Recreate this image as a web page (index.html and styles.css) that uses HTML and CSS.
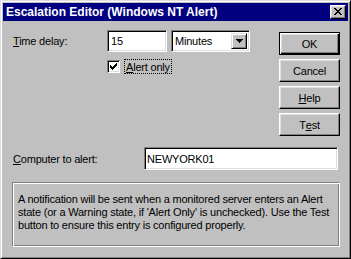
FILE: index.html
```html
<!DOCTYPE html>
<html>
<head>
<meta charset="utf-8">
<link rel="stylesheet" href="styles.css">
</head>
<body>
<div class="window">
  <div class="titlebar">
    <span class="title">Escalation Editor (Windows NT Alert)</span>
    <span class="close"><svg width="8" height="7" viewBox="0 0 8 7" shape-rendering="crispEdges"><path d="M0 0h2v1h-2z M6 0h2v1h-2z M1 1h2v1h-2z M5 1h2v1h-2z M2 2h4v1h-4z M3 3h2v1h-2z M2 4h4v1h-4z M1 5h2v1h-2z M5 5h2v1h-2z M0 6h2v1h-2z M6 6h2v1h-2z" fill="#000"/></svg></span>
  </div>
  <div class="content">
    <div class="top">
      <div class="form">
        <div class="row">
          <span class="lbl"><u>T</u>ime delay:</span>
          <span class="edit delay">15</span>
          <span class="combo"><span class="combo-text">Minutes</span><span class="drop"><svg width="7" height="4" viewBox="0 0 7 4" shape-rendering="crispEdges"><path d="M0 0h7v1h-7z M1 1h5v1h-5z M2 2h3v1h-3z M3 3h1v1h-1z" fill="#000"/></svg></span></span>
        </div>
        <div class="checkrow">
          <span class="check"><svg width="13" height="13" viewBox="0 0 13 13" shape-rendering="crispEdges"><path d="M3 5h1v3h-1z M4 6h1v3h-1z M5 7h1v3h-1z M6 6h1v3h-1z M7 5h1v3h-1z M8 4h1v3h-1z M9 3h1v3h-1z" fill="#000"/></svg></span>
          <span class="focus"><u>A</u>lert only</span>
        </div>
      </div>
      <div class="buttons">
        <span class="btn default">OK</span>
        <span class="btn">Cancel</span>
        <span class="btn"><u>H</u>elp</span>
        <span class="btn">T<u>e</u>st</span>
      </div>
    </div>
    <div class="comprow">
      <span class="lbl2"><u>C</u>omputer to alert:</span>
      <span class="edit comp">NEWYORK01</span>
    </div>
    <div class="panel">A notification will be sent when a monitored server enters an Alert state (or a Warning state, if 'Alert Only' is unchecked). Use the Test button to ensure this entry is configured properly.</div>
  </div>
</div>
</body>
</html>
```

FILE: styles.css
```css
* { box-sizing: border-box; }
html, body { margin: 0; padding: 0; }
body {
  width: 351px;
  height: 259px;
  overflow: hidden;
  background: #c0c0c0;
  font-family: "Liberation Sans", Arial, sans-serif;
  font-size: 11px;
  letter-spacing: -0.2px;
  color: #000;
}
u { text-decoration: underline; text-underline-offset: 1px; }
.window {
  width: 351px;
  height: 259px;
  background: #c0c0c0;
  border: 1px solid;
  border-color: #dfdfdf #000 #000 #dfdfdf;
  box-shadow: inset 1px 1px #fff, inset -1px -1px #808080;
  padding: 2px;
  display: flex;
  flex-direction: column;
}
.titlebar {
  height: 18px;
  flex: none;
  background: #000080;
  color: #fff;
  display: flex;
  align-items: center;
  justify-content: space-between;
  padding: 0 2px 0 3px;
}
.title {
  font-weight: bold;
  font-size: 12px;
  letter-spacing: 0;
}
.close {
  width: 16px;
  height: 14px;
  background: #c0c0c0;
  border: 1px solid;
  border-color: #fff #000 #000 #fff;
  box-shadow: inset -1px -1px #808080, inset 1px 1px #dfdfdf;
  display: flex;
  align-items: center;
  justify-content: center;
  padding-bottom: 1px;
}
.content {
  flex: 1;
  display: flex;
  flex-direction: column;
  padding: 9px 8px 0 10px;
}
.top {
  display: flex;
  justify-content: space-between;
}
.row {
  display: flex;
  align-items: center;
  height: 22px;
}
.lbl { width: 94px; }
.edit {
  background: #fff;
  border: 1px solid;
  border-color: #808080 #fff #fff #808080;
  box-shadow: inset 1px 1px #000, inset -1px -1px #dfdfdf;
  display: flex;
  align-items: center;
  padding: 0 3px;
}
.delay { width: 60px; height: 22px; margin-right: 4px; }
.combo {
  width: 79px;
  height: 22px;
  background: #fff;
  border: 1px solid;
  border-color: #808080 #fff #fff #808080;
  box-shadow: inset 1px 1px #000, inset -1px -1px #dfdfdf;
  display: flex;
  align-items: stretch;
  padding: 2px;
}
.combo-text { flex: 1; display: flex; align-items: center; padding-left: 1px; }
.drop {
  width: 16px;
  background: #c0c0c0;
  border: 1px solid;
  border-color: #dfdfdf #000 #000 #dfdfdf;
  box-shadow: inset 1px 1px #fff, inset -1px -1px #808080;
  display: flex;
  align-items: center;
  justify-content: center;
}
.checkrow {
  display: flex;
  align-items: center;
  margin-top: 7px;
  padding-left: 94px;
}
.check {
  width: 13px;
  height: 13px;
  background: #fff;
  box-shadow: inset 1px 1px #808080, inset -1px -1px #fff, inset 2px 2px #000, inset -2px -2px #dfdfdf;
  display: block;
}
.check svg { display: block; }
.focus {
  margin-left: 4px;
  height: 15px;
  padding: 0 1px;
  border: 1px dotted #000;
  display: flex;
  align-items: center;
}
.buttons {
  display: flex;
  flex-direction: column;
  gap: 4px;
  width: 61px;
  margin-top: 2px;
}
.btn {
  height: 23px;
  background: #c0c0c0;
  border: 1px solid;
  border-color: #fff #000 #000 #fff;
  box-shadow: inset -1px -1px #808080, inset 1px 1px #dfdfdf;
  display: flex;
  align-items: center;
  justify-content: center;
}
.btn.default {
  border-color: #000;
  box-shadow: inset 1px 1px #fff, inset -1px -1px #000, inset -2px -2px #808080, inset 2px 2px #dfdfdf;
}
.comprow {
  display: flex;
  align-items: center;
  margin-top: 11px;
}
.lbl2 { width: 131px; }
.comp { flex: 1; height: 23px; margin-right: 2px; padding-left: 2px; }
.panel {
  margin-top: 12px;
  margin-left: -1px;
  height: 65px;
  border: 1px solid;
  border-color: #808080 #fff #fff #808080;
  box-shadow: inset 1px 1px #fff, inset -1px -1px #808080;
  padding: 10px 6px 0 5px;
  line-height: 13px;
}
```
